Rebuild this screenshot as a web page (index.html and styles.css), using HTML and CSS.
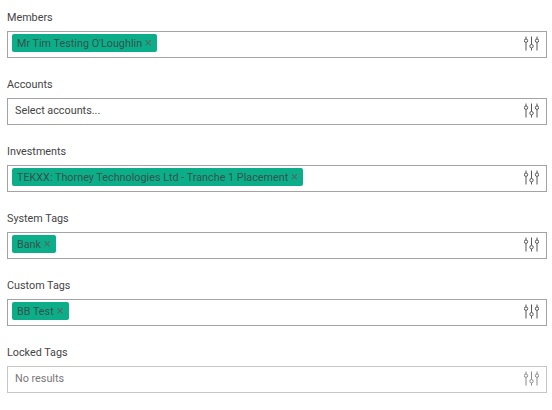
FILE: index.html
```html
<!DOCTYPE html>
<html lang="en">
<head>
<meta charset="utf-8">
<title>Filters</title>
<link rel="stylesheet" href="styles.css">
</head>
<body>
<svg class="defs" width="0" height="0" aria-hidden="true">
  <symbol id="sliders" viewBox="0 0 15 15">
    <g fill="none" stroke="currentColor" stroke-width="1">
      <path d="M2 0.5v2.5M2 6.5v8M7.5 0.5v8M7.5 12v2.5M13 0.5v2.5M13 6.5v8"/>
      <circle cx="2" cy="4.7" r="1.7"/>
      <circle cx="7.5" cy="10.2" r="1.7"/>
      <circle cx="13" cy="4.7" r="1.7"/>
    </g>
  </symbol>
</svg>
<form class="form">
  <div class="field">
    <div class="label">Members</div>
    <div class="select"><div class="values"><span class="chip">Mr Tim Testing O'Loughlin<span class="remove">×</span></span></div><svg class="icon"><use href="#sliders"/></svg></div>
  </div>
  <div class="field">
    <div class="label">Accounts</div>
    <div class="select"><div class="values"><span class="placeholder">Select accounts...</span></div><svg class="icon"><use href="#sliders"/></svg></div>
  </div>
  <div class="field">
    <div class="label">Investments</div>
    <div class="select"><div class="values"><span class="chip">TEKXX: Thorney Technologies Ltd - Tranche 1 Placement<span class="remove">×</span></span></div><svg class="icon"><use href="#sliders"/></svg></div>
  </div>
  <div class="field">
    <div class="label">System Tags</div>
    <div class="select"><div class="values"><span class="chip">Bank<span class="remove">×</span></span></div><svg class="icon"><use href="#sliders"/></svg></div>
  </div>
  <div class="field">
    <div class="label">Custom Tags</div>
    <div class="select"><div class="values"><span class="chip">BB Test<span class="remove">×</span></span></div><svg class="icon"><use href="#sliders"/></svg></div>
  </div>
  <div class="field disabled">
    <div class="label">Locked Tags</div>
    <div class="select"><div class="values"><span class="placeholder">No results</span></div><svg class="icon"><use href="#sliders"/></svg></div>
  </div>
</form>
</body>
</html>
```

FILE: styles.css
```css
html, body {
  margin: 0;
  padding: 0;
  background: #fff;
}
body {
  font-family: Roboto, "Liberation Sans", sans-serif;
  font-size: 10.8px;
  color: #444;
  overflow: hidden;
}
.defs {
  position: absolute;
}
.form {
  display: flex;
  flex-direction: column;
  gap: 20px;
  padding: 11px 5px 0 7px;
}
.label {
  height: 14px;
  line-height: 14px;
  margin-bottom: 6px;
  color: #444;
}
.select {
  box-sizing: border-box;
  height: 27px;
  display: flex;
  align-items: center;
  justify-content: space-between;
  border: 1px solid #a3a3a3;
  padding: 0 7px 3px 4px;
  background: #fff;
}
.select .icon {
  margin-bottom: -1px;
}
.values {
  display: flex;
  align-items: center;
  height: 18px;
}
.chip {
  display: inline-flex;
  align-items: center;
  height: 18px;
  box-sizing: border-box;
  padding: 0 5px;
  border-radius: 2px;
  background: #0cae8a;
  color: #37524c;
  white-space: nowrap;
}
.remove {
  margin-left: 3px;
  color: #4f6f68;
  font-size: 13px;
  line-height: 18px;
}
.placeholder {
  padding-left: 3px;
  color: #444;
}
.icon {
  width: 15px;
  height: 15px;
  color: #555;
  flex: none;
}
.disabled .select {
  border-color: #c6c6c6;
}
.disabled .placeholder {
  color: #777;
}
.disabled .icon {
  color: #8a8a8a;
}
```
